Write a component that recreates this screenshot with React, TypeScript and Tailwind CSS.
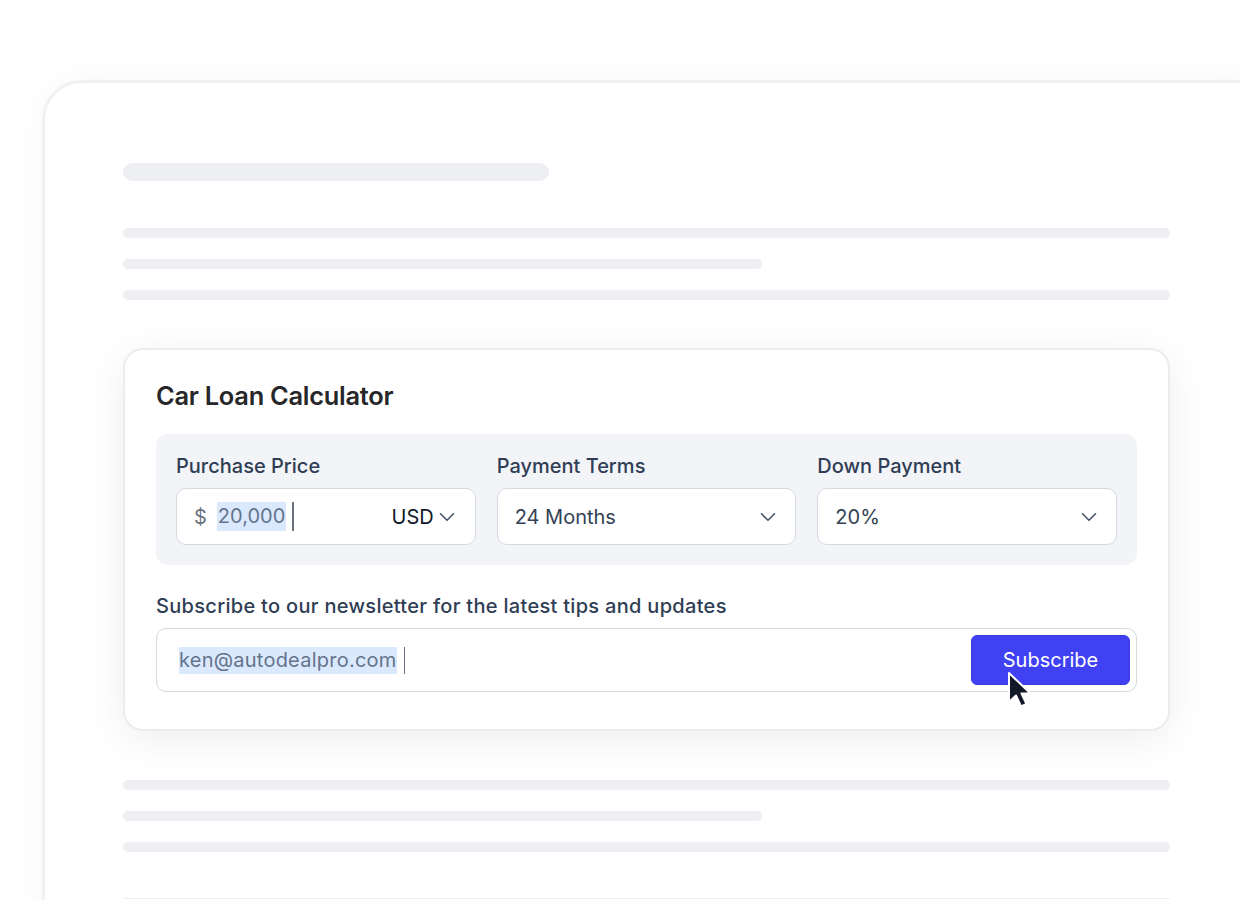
import { ChevronDown } from "lucide-react";

function Bar({ className }: { className: string }) {
  return <div className={`rounded-full bg-[#eeeff3] ${className}`} />;
}

function SelectBox({ value }: { value: string }) {
  return (
    <div className="flex h-[57px] items-center justify-between rounded-[10px] border border-[#d5d9e0] bg-white pl-[17px] pr-[14px]">
      <span className="text-[20px] text-[#334155]">{value}</span>
      <ChevronDown size={26} strokeWidth={1.5} className="text-[#475569]" />
    </div>
  );
}

function Cursor() {
  return (
    <svg width="28" height="40" viewBox="0 0 28 40" className="absolute left-[36px] top-[36px]">
      <path
        d="M2 2 L2 31 L9 24.5 L14 35.5 L19.5 33 L14.5 22.5 L23.5 22.5 Z"
        fill="#111827"
        stroke="#ffffff"
        strokeWidth="2"
        strokeLinejoin="round"
      />
    </svg>
  );
}

export default function App() {
  return (
    <div className="relative h-[900px] w-[1240px] overflow-hidden bg-white font-['Inter',sans-serif]">
      <div className="ml-[42px] mt-[80px] h-[900px] w-[1240px] rounded-[40px] border-[3px] border-[#f1f1f2] pl-[78px] pt-[80px] shadow-[0_0_30px_rgba(0,0,0,0.035)]">
        <div className="w-[1047px]">
          {/* skeleton header */}
          <Bar className="h-[18px] w-[426px]" />
          <div className="mt-[47px] flex flex-col gap-[21px]">
            <Bar className="h-[10px] w-full" />
            <Bar className="h-[10px] w-[639px]" />
            <Bar className="h-[10px] w-full" />
          </div>

          {/* calculator card */}
          <div className="mt-[48px] rounded-[20px] border-2 border-[#ececee] bg-white px-[31px] pb-[37px] pt-[30px] shadow-[0_8px_40px_rgba(0,0,0,0.07)]">
            <h1 className="text-[25.4px] font-semibold leading-[32px] tracking-[-0.01em] text-[#27272a]">
              Car Loan Calculator
            </h1>

            <div className="mt-[22px] grid grid-cols-3 gap-[21px] rounded-[12px] bg-[#f3f4f8] p-5">
              <div>
                <div className="mb-[9px] text-[20px] font-medium leading-[25px] text-[#2f3d55]">Purchase Price</div>
                <div className="flex h-[57px] items-center justify-between rounded-[10px] border border-[#d5d9e0] bg-white pl-[17px] pr-[15px]">
                  <div className="flex items-center">
                    <span className="text-[20px] text-[#6b7280]">$</span>
                    <span className="ml-[10px] bg-[#dbe9fe] px-[1px] text-[20px] leading-[29px] text-[#64748b]">20,000</span>
                    <span className="ml-[6px] h-[29px] w-[1.5px] bg-[#6b7280]" />
                  </div>
                  <div className="flex items-center">
                    <span className="text-[20px] text-[#111827]">USD</span>
                    <ChevronDown size={26} strokeWidth={1.5} className="text-[#475569]" />
                  </div>
                </div>
              </div>
              <div>
                <div className="mb-[9px] text-[20px] font-medium leading-[25px] text-[#2f3d55]">Payment Terms</div>
                <SelectBox value="24 Months" />
              </div>
              <div>
                <div className="mb-[9px] text-[20px] font-medium leading-[25px] text-[#2f3d55]">Down Payment</div>
                <SelectBox value="20%" />
              </div>
            </div>

            <div className="mt-[29px] text-[20px] font-medium leading-[25px] tracking-[0.015em] text-[#2f3d55]">
              Subscribe to our newsletter for the latest tips and updates
            </div>
            <div className="mt-[9px] flex h-[64px] items-center justify-between rounded-[10px] border border-[#d5d9e0] bg-white pl-[22px] pr-[6px]">
              <div className="flex items-center">
                <span className="bg-[#dbe9fe] text-[20px] leading-[27px] tracking-[0.012em] text-[#64748b]">ken@autodealpro.com</span>
                <span className="ml-[7px] h-[27px] w-[1.5px] bg-[#6b7280]" />
              </div>
              <div className="relative">
                <button className="h-[50px] w-[159px] rounded-[6px] border border-[#3a3ae0] bg-[#4141f4] text-[20px] text-white">
                  Subscribe
                </button>
                <Cursor />
              </div>
            </div>
          </div>

          {/* skeleton footer */}
          <div className="mt-[49px] flex flex-col gap-[21px]">
            <Bar className="h-[10px] w-full" />
            <Bar className="h-[10px] w-[639px]" />
            <Bar className="h-[10px] w-full" />
          </div>
          <div className="mt-[46px] border-t border-[#eeeeef]" />
        </div>
      </div>
    </div>
  );
}
